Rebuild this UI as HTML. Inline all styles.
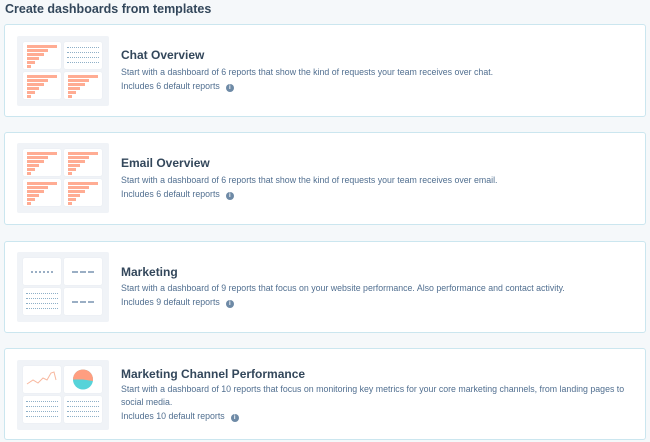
<!DOCTYPE html>
<html><head><style>
*{margin:0;padding:0;box-sizing:border-box}
body{width:650px;height:442px;background:#f5f8fa;font-family:"Liberation Sans",sans-serif;position:relative;overflow:hidden}
.h{position:absolute;left:5px;top:2px;font-size:12.5px;font-weight:bold;color:#33475b}
.card{position:absolute;left:4px;width:642px;background:#fff;border:1.5px solid #cbe6ef;border-radius:3px}
.th{position:absolute;left:12px;width:92px;height:70px;background:#f0f3f7;border-radius:2px}
.p{position:absolute;width:38px;height:27px;background:#fff;border-radius:2px;box-shadow:0 0 1px #dde3ea}
.t{position:absolute;left:116px;font-size:12px;font-weight:bold;color:#33475b;white-space:nowrap}
.d{position:absolute;left:116px;font-size:8.8px;color:#516f90;white-space:nowrap;line-height:13px}
.i{display:inline-block;width:8px;height:8px;border-radius:50%;background:#6e8aa6;color:#fff;font-size:6px;text-align:center;line-height:8px;margin-left:6px;font-weight:bold;vertical-align:0px}
.b{position:absolute;left:4px;height:3px;background:#ff9e80;opacity:.85}
.tl{position:absolute;height:1px;border-top:1px dotted #8fb0c8}
</style></head><body>
<div class="h">Create dashboards from templates</div>

<div class="card" style="top:24px;height:93px">
 <div class="th" style="top:11px">
  <div class="p" style="left:6px;top:6px"><div class="b" style="top:3px;width:30px"></div><div class="b" style="top:7px;width:21px"></div><div class="b" style="top:11px;width:17px"></div><div class="b" style="top:15px;width:12px"></div><div class="b" style="top:19px;width:8px"></div><div class="b" style="top:23px;width:4px"></div></div>
  <div class="p" style="left:47px;top:6px"><div class="tl" style="left:3px;right:3px;top:5px"></div><div class="tl" style="left:3px;right:3px;top:10px"></div><div class="tl" style="left:3px;right:3px;top:15px"></div><div class="tl" style="left:3px;right:3px;top:20px"></div></div>
  <div class="p" style="left:6px;top:36px"><div class="b" style="top:3px;width:30px"></div><div class="b" style="top:7px;width:21px"></div><div class="b" style="top:11px;width:17px"></div><div class="b" style="top:15px;width:12px"></div><div class="b" style="top:19px;width:8px"></div><div class="b" style="top:23px;width:4px"></div></div>
  <div class="p" style="left:47px;top:36px"><div class="b" style="top:3px;width:30px"></div><div class="b" style="top:7px;width:21px"></div><div class="b" style="top:11px;width:17px"></div><div class="b" style="top:15px;width:12px"></div><div class="b" style="top:19px;width:8px"></div><div class="b" style="top:23px;width:4px"></div></div>
 </div>
 <div class="t" style="top:23px">Chat Overview</div>
 <div class="d" style="top:41px">Start with a dashboard of 6 reports that show the kind of requests your team receives over chat.</div>
 <div class="d" style="top:55px">Includes 6 default reports<span class="i">i</span></div>
</div>

<div class="card" style="top:132px;height:93px">
 <div class="th" style="top:10px">
  <div class="p" style="left:6px;top:6px"><div class="b" style="top:3px;width:30px"></div><div class="b" style="top:7px;width:21px"></div><div class="b" style="top:11px;width:17px"></div><div class="b" style="top:15px;width:12px"></div><div class="b" style="top:19px;width:8px"></div><div class="b" style="top:23px;width:4px"></div></div>
  <div class="p" style="left:47px;top:6px"><div class="b" style="top:3px;width:30px"></div><div class="b" style="top:7px;width:21px"></div><div class="b" style="top:11px;width:17px"></div><div class="b" style="top:15px;width:12px"></div><div class="b" style="top:19px;width:8px"></div><div class="b" style="top:23px;width:4px"></div></div>
  <div class="p" style="left:6px;top:36px"><div class="b" style="top:3px;width:30px"></div><div class="b" style="top:7px;width:21px"></div><div class="b" style="top:11px;width:17px"></div><div class="b" style="top:15px;width:12px"></div><div class="b" style="top:19px;width:8px"></div><div class="b" style="top:23px;width:4px"></div></div>
  <div class="p" style="left:47px;top:36px"><div class="b" style="top:3px;width:30px"></div><div class="b" style="top:7px;width:21px"></div><div class="b" style="top:11px;width:17px"></div><div class="b" style="top:15px;width:12px"></div><div class="b" style="top:19px;width:8px"></div><div class="b" style="top:23px;width:4px"></div></div>
 </div>
 <div class="t" style="top:23px">Email Overview</div>
 <div class="d" style="top:41px">Start with a dashboard of 6 reports that show the kind of requests your team receives over email.</div>
 <div class="d" style="top:55px">Includes 6 default reports<span class="i">i</span></div>
</div>

<div class="card" style="top:241px;height:92px">
 <div class="th" style="top:10px">
  <div class="p" style="left:6px;top:6px"><div class="tl" style="left:8px;width:22px;top:13px;border-top:2px dotted #9aaec4"></div></div>
  <div class="p" style="left:47px;top:6px"><div class="tl" style="left:8px;width:22px;top:13px;border-top:2px dashed #9aaec4"></div></div>
  <div class="p" style="left:6px;top:36px"><div class="tl" style="left:3px;right:3px;top:5px"></div><div class="tl" style="left:3px;right:3px;top:10px"></div><div class="tl" style="left:3px;right:3px;top:15px"></div><div class="tl" style="left:3px;right:3px;top:20px"></div></div>
  <div class="p" style="left:47px;top:36px"><div class="tl" style="left:8px;width:22px;top:13px;border-top:2px dashed #9aaec4"></div></div>
 </div>
 <div class="t" style="top:23px">Marketing</div>
 <div class="d" style="top:40px">Start with a dashboard of 9 reports that focus on your website performance. Also performance and contact activity.</div>
 <div class="d" style="top:54px">Includes 9 default reports<span class="i">i</span></div>
</div>

<div class="card" style="top:348px;height:92px">
 <div class="th" style="top:11px">
  <div class="p" style="left:6px;top:6px"><svg width="38" height="27"><polyline points="4,18 10,14 15,17 20,12 24,14 28,7 31,6 33,14" fill="none" stroke="#f8b89f" stroke-width="1"/></svg></div>
  <div class="p" style="left:47px;top:6px"><svg width="38" height="27"><circle cx="19" cy="13.5" r="10" fill="#56d3d9"/><path d="M9,13.5 A10,10 0 0 1 29,13.5 L29,15 L19,13.5 Z" fill="#ff9e80"/></svg></div>
  <div class="p" style="left:6px;top:36px"><div class="tl" style="left:3px;right:3px;top:5px"></div><div class="tl" style="left:3px;right:3px;top:10px"></div><div class="tl" style="left:3px;right:3px;top:15px"></div><div class="tl" style="left:3px;right:3px;top:20px"></div></div>
  <div class="p" style="left:47px;top:36px"><div class="tl" style="left:3px;right:3px;top:5px"></div><div class="tl" style="left:3px;right:3px;top:10px"></div><div class="tl" style="left:3px;right:3px;top:15px"></div><div class="tl" style="left:3px;right:3px;top:20px"></div></div>
 </div>
 <div class="t" style="top:18px">Marketing Channel Performance</div>
 <div class="d" style="top:34px">Start with a dashboard of 10 reports that focus on monitoring key metrics for your core marketing channels, from landing pages to<br>social media.</div>
 <div class="d" style="top:61px">Includes 10 default reports<span class="i">i</span></div>
</div>
</body></html>
